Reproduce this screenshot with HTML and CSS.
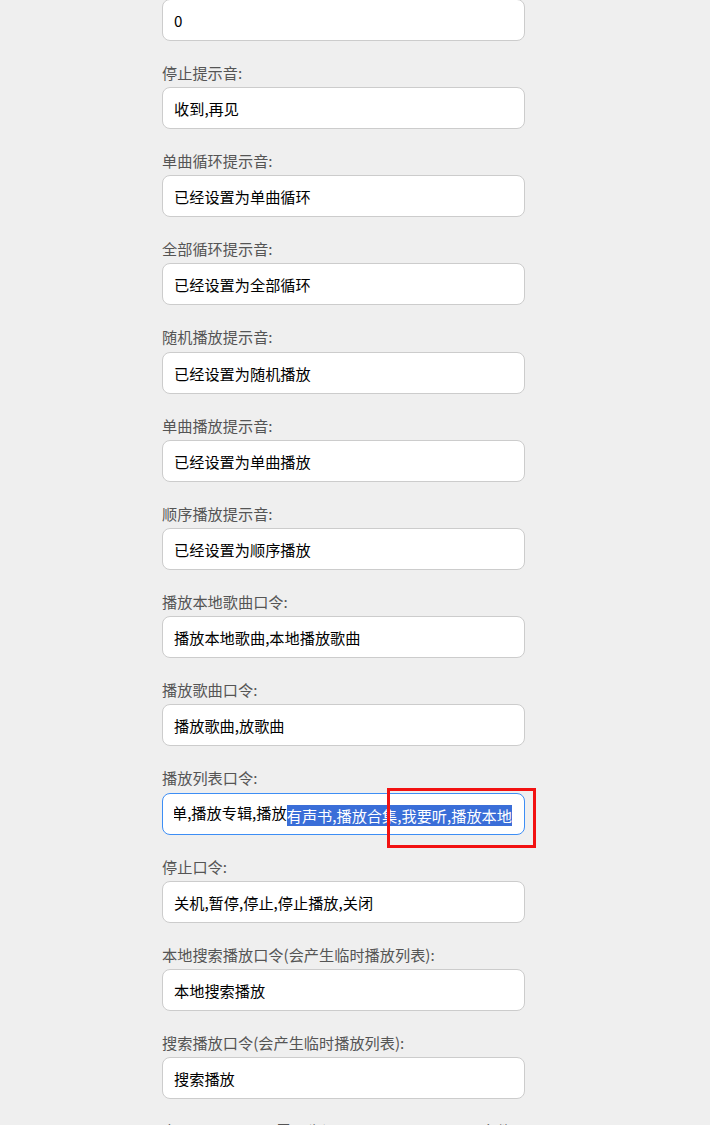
FILE: index.html
```html
<!DOCTYPE html>
<html lang="zh-CN">
<head>
<meta charset="utf-8">
<title>设置</title>
<link rel="stylesheet" href="styles.css">
</head>
<body>
<div class="form">
  <div class="field first">
    <div class="input">0</div>
  </div>
  <div class="field">
    <label class="label">停止提示音:</label>
    <div class="input">收到,再见</div>
  </div>
  <div class="field">
    <label class="label">单曲循环提示音:</label>
    <div class="input">已经设置为单曲循环</div>
  </div>
  <div class="field">
    <label class="label">全部循环提示音:</label>
    <div class="input">已经设置为全部循环</div>
  </div>
  <div class="field">
    <label class="label">随机播放提示音:</label>
    <div class="input">已经设置为随机播放</div>
  </div>
  <div class="field">
    <label class="label">单曲播放提示音:</label>
    <div class="input">已经设置为单曲播放</div>
  </div>
  <div class="field">
    <label class="label">顺序播放提示音:</label>
    <div class="input">已经设置为顺序播放</div>
  </div>
  <div class="field">
    <label class="label">播放本地歌曲口令:</label>
    <div class="input">播放本地歌曲,本地播放歌曲</div>
  </div>
  <div class="field">
    <label class="label">播放歌曲口令:</label>
    <div class="input">播放歌曲,放歌曲</div>
  </div>
  <div class="field annotated">
    <label class="label">播放列表口令:</label>
    <div class="input focused"><div class="clip"><span class="scroll">播放歌单,播放专辑,播放<span class="sel">有声书,播放合集,我要听,播放本地</span></span></div></div>
    <div class="mark"></div>
  </div>
  <div class="field">
    <label class="label">停止口令:</label>
    <div class="input">关机,暂停,停止,停止播放,关闭</div>
  </div>
  <div class="field">
    <label class="label">本地搜索播放口令(会产生临时播放列表):</label>
    <div class="input">本地搜索播放</div>
  </div>
  <div class="field">
    <label class="label">搜索播放口令(会产生临时播放列表):</label>
    <div class="input">搜索播放</div>
  </div>
  <div class="field">
    <label class="label">启用 cron arrow 需要先设置 ncm server name 文件:</label>
    <div class="input">&nbsp;</div>
  </div>
</div>
</body>
</html>
```

FILE: styles.css
```css
html, body {
  margin: 0;
  padding: 0;
  background: #efefef;
}

body {
  font-family: "Noto Sans CJK SC", "Liberation Sans", sans-serif;
  font-size: 15.2px;
  color: #000;
  overflow: hidden;
}

.form {
  width: 363px;
  margin-left: 162px;
  margin-top: -1.2px;
  display: flex;
  flex-direction: column;
}

.field {
  display: flex;
  flex-direction: column;
  margin-bottom: 20px;
}

.label {
  display: block;
  color: #555;
  line-height: 22.2px;
  height: 22.2px;
  margin-bottom: 4px;
  white-space: nowrap;
}

.input {
  box-sizing: border-box;
  height: 42px;
  background: #fff;
  border: 1px solid #ccc;
  border-radius: 8px;
  padding: 0 12px 0 11px;
  display: flex;
  align-items: center;
  white-space: nowrap;
  overflow: hidden;
}

.input.focused {
  border-color: #3d8ef5;
}

.clip {
  flex: 1;
  min-width: 0;
  display: flex;
  justify-content: flex-end;
  overflow: hidden;
}

.scroll {
  flex: none;
  white-space: nowrap;
}

.sel {
  display: inline-block;
  background: #3a6ed8;
  color: #fff;
  line-height: 21px;
  height: 21px;
  vertical-align: middle;
}

.annotated {
  position: relative;
}

.mark {
  position: absolute;
  left: 225px;
  top: 21.8px;
  width: 149px;
  height: 60px;
  box-sizing: border-box;
  border: 3px solid #f21212;
  pointer-events: none;
}
```
